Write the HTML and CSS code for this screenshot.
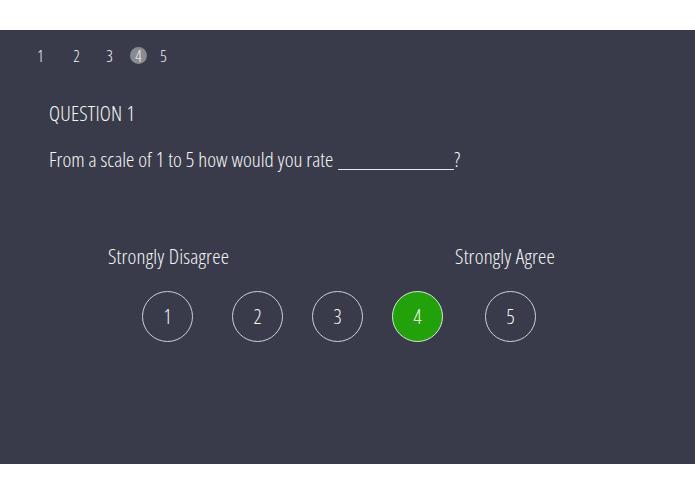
FILE: index.html
```html
<!DOCTYPE html>
<html>
<head>
<meta charset="utf-8">
<link rel="stylesheet" href="styles.css">
</head>
<body>
<div class="panel">
  <nav class="steps">
    <span class="step s1">1</span>
    <span class="step s2">2</span>
    <span class="step s3">3</span>
    <span class="step s4 current">4</span>
    <span class="step s5">5</span>
  </nav>
  <h1 class="qtitle">QUESTION 1</h1>
  <p class="qtext">From a scale of 1 to 5 how would you rate <span class="blank"></span>?</p>
  <div class="labels">
    <span class="lab lab-left">Strongly Disagree</span>
    <span class="lab lab-right">Strongly Agree</span>
  </div>
  <div class="options">
    <span class="opt o1">1</span>
    <span class="opt o2">2</span>
    <span class="opt o3">3</span>
    <span class="opt o4 selected">4</span>
    <span class="opt o5">5</span>
  </div>
</div>
</body>
</html>
```
FILE: styles.css
```css
html, body {
  margin: 0;
  padding: 0;
  background: #ffffff;
}
body {
  padding-top: 30px;
  font-family: "Open Sans", "Roboto", sans-serif;
  font-stretch: 75%;
  font-weight: 300;
  color: #f6f6f8;
}
.panel {
  background: #393b4a;
  height: 434px;
  box-sizing: border-box;
  padding-top: 17px;
  overflow: hidden;
}
.steps {
  display: flex;
  align-items: center;
  height: 17px;
  font-size: 16px;
  padding-left: 37px;
}
.step {
  display: inline-flex;
  align-items: center;
  justify-content: center;
  width: 7px;
  height: 17px;
}
.s2 { margin-left: 29px; }
.s3 { margin-left: 26px; }
.s4 { margin-left: 17px; width: 17px; border-radius: 50%; background: #8a8b90; }
.s5 { margin-left: 13px; }
.qtitle {
  margin: 37px 0 0 49px;
  font-weight: 300;
  font-size: 21px;
  letter-spacing: 0.2px;
  line-height: 24px;
}
.qtext {
  margin: 22px 0 0 49px;
  font-size: 21px;
  line-height: 24px;
}
.blank {
  display: inline-block;
  width: 116px;
  border-bottom: 1px solid #e8e8ea;
  height: 18px;
  margin-bottom: -3px;
  margin-left: 1px;
}
.labels {
  display: flex;
  margin-top: 73px;
  padding-left: 108px;
  font-size: 21px;
  letter-spacing: 0.2px;
  line-height: 24px;
}
.lab-right { margin-left: auto; margin-right: 140px; }
.options {
  display: flex;
  margin-top: 23px;
  padding-left: 142px;
}
.opt {
  box-sizing: border-box;
  width: 51px;
  height: 51px;
  border-radius: 50%;
  border: 1px solid #cfd0d4;
  display: flex;
  align-items: center;
  justify-content: center;
  font-size: 20px;
}
.o2 { margin-left: 39px; }
.o3 { margin-left: 29px; }
.o4 { margin-left: 29px; }
.o5 { margin-left: 42px; }
.selected {
  background: #22a10a;
  border-color: #d8e8d0;
}
```
